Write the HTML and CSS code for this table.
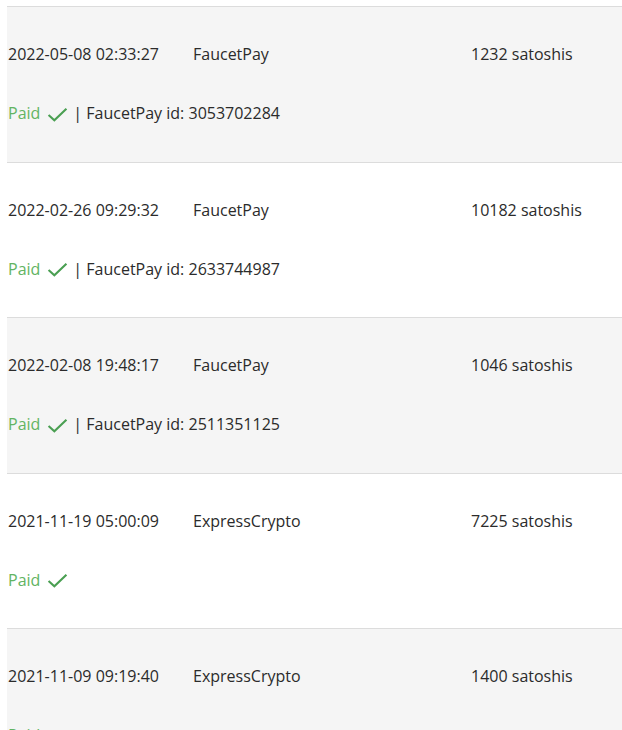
FILE: index.html
```html
<!DOCTYPE html>
<html>
<head>
<meta charset="utf-8">
<link rel="stylesheet" href="styles.css">
</head>
<body>
<div class="list">
  <div class="row shaded">
    <div class="line main"><span class="date">2022-05-08 02:33:27</span><span class="prov">FaucetPay</span><span class="amt">1232 satoshis</span></div>
    <div class="line status"><span class="paid">Paid <svg class="check" viewBox="0 0 20 14"><path d="M1.5 7.5 L7 12.5 L18.5 1.5"/></svg></span> | FaucetPay id: 3053702284</div>
  </div>
  <div class="row">
    <div class="line main"><span class="date">2022-02-26 09:29:32</span><span class="prov">FaucetPay</span><span class="amt">10182 satoshis</span></div>
    <div class="line status"><span class="paid">Paid <svg class="check" viewBox="0 0 20 14"><path d="M1.5 7.5 L7 12.5 L18.5 1.5"/></svg></span> | FaucetPay id: 2633744987</div>
  </div>
  <div class="row shaded">
    <div class="line main"><span class="date">2022-02-08 19:48:17</span><span class="prov">FaucetPay</span><span class="amt">1046 satoshis</span></div>
    <div class="line status"><span class="paid">Paid <svg class="check" viewBox="0 0 20 14"><path d="M1.5 7.5 L7 12.5 L18.5 1.5"/></svg></span> | FaucetPay id: 2511351125</div>
  </div>
  <div class="row">
    <div class="line main"><span class="date">2021-11-19 05:00:09</span><span class="prov">ExpressCrypto</span><span class="amt">7225 satoshis</span></div>
    <div class="line status"><span class="paid">Paid <svg class="check" viewBox="0 0 20 14"><path d="M1.5 7.5 L7 12.5 L18.5 1.5"/></svg></span></div>
  </div>
  <div class="row shaded">
    <div class="line main"><span class="date">2021-11-09 09:19:40</span><span class="prov">ExpressCrypto</span><span class="amt">1400 satoshis</span></div>
    <div class="line status"><span class="paid">Paid <svg class="check" viewBox="0 0 20 14"><path d="M1.5 7.5 L7 12.5 L18.5 1.5"/></svg></span></div>
  </div>
</div>
</body>
</html>
```
FILE: styles.css
```css
html, body {
  margin: 0;
  padding: 0;
  background: #fff;
}
body {
  font-family: "Open Sans", "Noto Sans", sans-serif;
  font-size: 16px;
  color: #2b2b2b;
  padding: 6px 0 0 7px;
  overflow: hidden;
}
.list {
  display: flex;
  flex-direction: column;
}
.row {
  border-top: 1px solid #dcdcdc;
  padding: 35px 0 36.5px 1px;
  display: flex;
  flex-direction: column;
  gap: 35px;
}
.row.shaded {
  background: #f5f5f5;
}
.line {
  line-height: 24px;
  height: 24px;
  display: flex;
  align-items: center;
  white-space: nowrap;
}
.date { width: 185px; }
.prov { width: 278px; }
.paid {
  color: #62b462;
  display: inline-flex;
  align-items: center;
  margin-right: 5px;
}
.check {
  width: 21px;
  height: 15px;
  margin-left: 7px;
  margin-top: 2px;
  fill: none;
  stroke: #4a9f52;
  stroke-width: 2;
}
```
